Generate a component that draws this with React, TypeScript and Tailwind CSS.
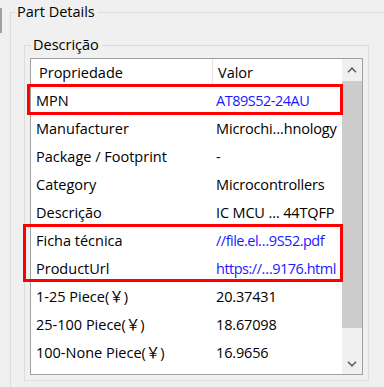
import React from 'react';

type Row = { prop: string; value: string; link?: boolean };

const rows: Row[] = [
  { prop: 'MPN', value: 'AT89S52-24AU', link: true },
  { prop: 'Manufacturer', value: 'Microchi…hnology' },
  { prop: 'Package / Footprint', value: '-' },
  { prop: 'Category', value: 'Microcontrollers' },
  { prop: 'Descrição', value: 'IC MCU … 44TQFP' },
  { prop: 'Ficha técnica', value: '//file.el…9S52.pdf', link: true },
  { prop: 'ProductUrl', value: 'https://…9176.html', link: true },
  { prop: '1-25 Piece(￥)', value: '20.37431' },
  { prop: '25-100 Piece(￥)', value: '18.67098' },
  { prop: '100-None Piece(￥)', value: '16.9656' },
];

const font = {
  fontFamily: '"Open Sans", "Noto Sans", "Noto Sans CJK SC", sans-serif',
};

const Chevron = ({ up }: { up?: boolean }) => (
  <svg width="10" height="6" viewBox="0 0 10 6" className="block">
    <path
      d={up ? 'M1 5.2 L5 1.2 L9 5.2' : 'M1 0.8 L5 4.8 L9 0.8'}
      fill="none"
      stroke="#606060"
      strokeWidth="1.6"
    />
  </svg>
);

export default function App() {
  return (
    <div
      className="relative w-[384px] h-[387px] overflow-hidden bg-[#f0f0f0] text-[14.5px] text-black flex"
      style={font}
    >
      {/* splitter edge */}
      <div className="w-[2px] h-[25px] mt-[8px] bg-[#a0a0a0] shrink-0" />

      {/* Part Details group */}
      <fieldset className="ml-[8px] mt-[2px] w-[420px] h-[420px] shrink-0 border border-[#dcdcdc]">
        <legend className="ml-[4px] pl-[2px] pr-[3px] leading-[20px]">Part Details</legend>

        {/* Descrição group */}
        <fieldset className="ml-[13px] mt-[13px] w-[345px] border border-[#dcdcdc] pb-[5px]">
          <legend className="ml-[6px] pl-[2px] pr-[3px] leading-[20px]">Descrição</legend>

          {/* list view */}
          <div className="ml-[5px] mt-[3px] w-[333px] h-[317px] border border-[#a0a0a0] bg-white flex">
            <div className="flex-1 flex flex-col">
              <div className="h-[28px] flex shrink-0">
                <div className="w-[182px] border-r border-[#e5e5e5] pl-[8px] flex items-center">Propriedade</div>
                <div className="flex-1 pl-[5px] flex items-center">Valor</div>
              </div>
              {rows.map((r) => (
                <div key={r.prop} className="h-[28px] flex shrink-0">
                  <div className="w-[182px] pl-[5px] flex items-center whitespace-nowrap">{r.prop}</div>
                  <div
                    className={`flex-1 pl-[3px] flex items-center whitespace-nowrap overflow-hidden ${
                      r.link ? 'text-[#1a1aff] tracking-[-0.5px]' : 'tracking-[-0.15px]'
                    }`}
                  >
                    {r.value}
                  </div>
                </div>
              ))}
            </div>

            {/* scrollbar */}
            <div className="w-[20px] bg-[#f0f0f0] flex flex-col">
              <div className="h-[22px] flex items-center justify-center">
                <Chevron up />
              </div>
              <div className="h-[247px] bg-[#cdcdcd]" />
              <div className="flex-1 flex items-end justify-center pb-[7px]">
                <Chevron />
              </div>
            </div>
          </div>
        </fieldset>
      </fieldset>

      {/* highlight annotations */}
      <div className="absolute left-[27px] top-[84px] w-[316px] h-[31px] border-[3px] border-[#ff0000]" />
      <div className="absolute left-[23px] top-[224px] w-[320px] h-[58px] border-[3px] border-[#ff0000]" />
    </div>
  );
}
